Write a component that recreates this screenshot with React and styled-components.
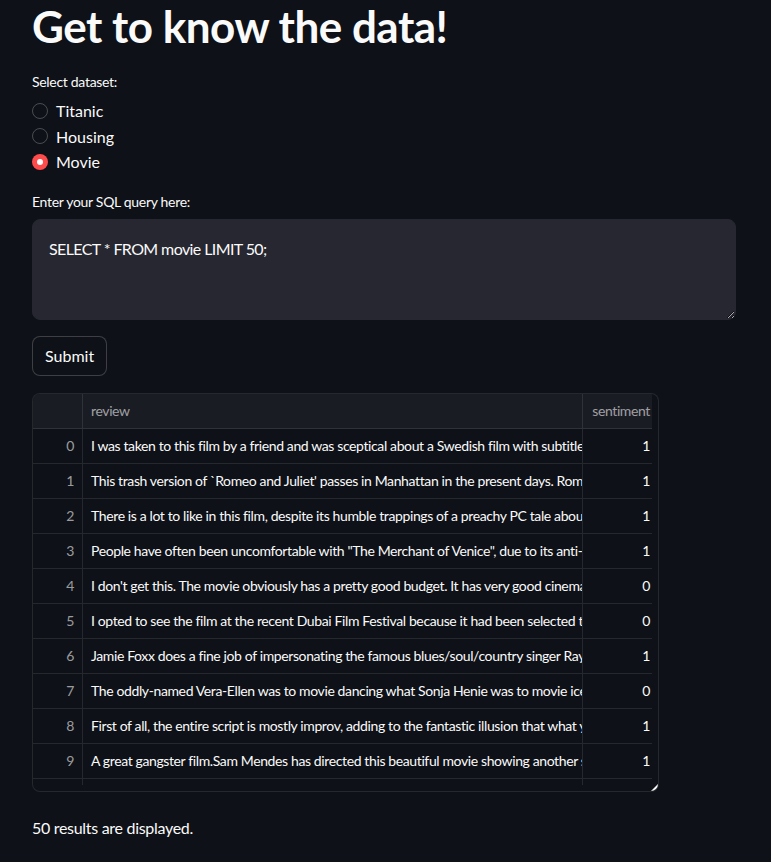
import styled, { createGlobalStyle } from "styled-components";

const Global = createGlobalStyle`
  html, body { margin: 0; padding: 0; background: #0e1117; }
  body { font-family: Lato, "Noto Sans", sans-serif; color: #fafafa; }
  * { box-sizing: border-box; }
`;

const Main = styled.main`
  display: flex;
  flex-direction: column;
  width: 704px;
  margin-left: 32px;
  padding-bottom: 22px;
`;

const Title = styled.h1`
  margin: 0;
  font-size: 44px;
  line-height: 53px;
  font-weight: 700;
  letter-spacing: -0.5px;
`;

const Label = styled.div`
  font-size: 14px;
  line-height: 20px;
  letter-spacing: -0.3px;
  margin-top: ${p => p.$top}px;
`;

const RadioList = styled.div`
  display: flex;
  flex-direction: column;
  margin-top: 6px;
`;

const RadioRow = styled.label`
  display: flex;
  align-items: center;
  gap: 8px;
  height: 25.5px;
  font-size: 16px;
  cursor: pointer;
`;

const Dot = styled.span`
  width: 16px;
  height: 16px;
  border-radius: 50%;
  flex: none;
  display: grid;
  place-items: center;
  border: ${p => (p.$on ? "none" : "1px solid rgba(250,250,250,0.25)")};
  background: ${p => (p.$on ? "#ff4b4b" : "transparent")};
  &::after {
    content: "";
    display: ${p => (p.$on ? "block" : "none")};
    width: 6px;
    height: 6px;
    border-radius: 50%;
    background: #fff;
  }
`;

const Query = styled.textarea`
  margin-top: 7px;
  width: 704px;
  height: 101px;
  padding: 16px;
  border: 1px solid #262730;
  border-radius: 8px;
  background: #262730;
  color: #fafafa;
  font: 16px/26px Lato, "Noto Sans", sans-serif;
  letter-spacing: -0.6px;
  resize: vertical;
  outline: none;
`;

const Button = styled.button`
  align-self: flex-start;
  margin-top: 16px;
  height: 40px;
  padding: 0 12px;
  border: 1px solid rgba(250,250,250,0.2);
  border-radius: 8px;
  background: #0e1117;
  color: #fafafa;
  font: 16px Lato, "Noto Sans", sans-serif;
`;

const Table = styled.div`
  position: relative;
  margin-top: 17px;
  width: 627px;
  height: 399px;
  border: 1px solid rgba(250,250,250,0.1);
  border-radius: 8px;
  overflow: hidden;
  background: #0e1117;
`;

const Viewport = styled.div`
  width: 619px;
  height: 391px;
  overflow: hidden;
  display: grid;
  grid-template-columns: 50px 500px 69px;
  grid-auto-rows: 35px;
  align-content: start;
`;

const Cell = styled.div`
  height: 35px;
  padding: 0 ${p => (p.$last ? 2 : 8)}px 0 8px;
  display: flex;
  align-items: center;
  justify-content: ${p => (p.$right ? "flex-end" : "flex-start")};
  font-size: 14px;
  letter-spacing: -0.38px;
  white-space: nowrap;
  overflow: hidden;
  border-bottom: 1px solid rgba(250,250,250,0.1);
  border-right: ${p => (p.$last ? "none" : "1px solid rgba(250,250,250,0.1)")};
  background: ${p => (p.$head ? "#1a1c24" : "transparent")};
  color: ${p => (p.$muted ? "rgba(250,250,250,0.6)" : "#fafafa")};
`;

const Grip = styled.span`
  position: absolute;
  right: 0;
  bottom: 0;
  width: 0;
  height: 0;
  border-left: 7px solid transparent;
  border-bottom: 7px solid #fafafa;
`;

const Result = styled.p`
  margin: 24px 0 0;
  font-size: 16px;
  line-height: 24px;
  letter-spacing: -0.3px;
`;

const rows = [
  ["I was taken to this film by a friend and was sceptical about a Swedish film with subtitles, but it turned out to be wonderful", 1],
  ["This trash version of `Romeo and Juliet' passes in Manhattan in the present days. Romeo is a poor bartender", 1],
  ["There is a lot to like in this film, despite its humble trappings of a preachy PC tale about tolerance", 1],
  ["People have often been uncomfortable with \"The Merchant of Venice\", due to its anti-Semitic elements", 1],
  ["I don't get this. The movie obviously has a pretty good budget. It has very good cinematography and", 0],
  ["I opted to see the film at the recent Dubai Film Festival because it had been selected to open", 0],
  ["Jamie Foxx does a fine job of impersonating the famous blues/soul/country singer Ray Charles", 1],
  ["The oddly-named Vera-Ellen was to movie dancing what Sonja Henie was to movie ice skating", 0],
  ["First of all, the entire script is mostly improv, adding to the fantastic illusion that what you see", 1],
  ["A great gangster film.Sam Mendes has directed this beautiful movie showing another side of", 1],
  ["", ""],
];

export default function App() {
  const options = ["Titanic", "Housing", "Movie"];
  return (
    <>
      <Global />
      <Main>
        <Title>Get to know the data!</Title>

        <Label $top={19}>Select dataset:</Label>
        <RadioList>
          {options.map(o => (
            <RadioRow key={o}>
              <Dot $on={o === "Movie"} />
              {o}
            </RadioRow>
          ))}
        </RadioList>

        <Label $top={17}>Enter your SQL query here:</Label>
        <Query defaultValue="SELECT * FROM movie LIMIT 50;" />

        <Button>Submit</Button>

        <Table>
          <Viewport>
            <Cell $head />
            <Cell $head $muted>review</Cell>
            <Cell $head $muted $right $last>sentiment</Cell>
            {rows.map(([text, s], i) => [
              <Cell key={`i${i}`} $muted $right>{i < 10 ? i : ""}</Cell>,
              <Cell key={`r${i}`}>{text}</Cell>,
              <Cell key={`s${i}`} $right $last>{s}</Cell>,
            ])}
          </Viewport>
          <Grip />
        </Table>

        <Result>50 results are displayed.</Result>
      </Main>
    </>
  );
}
